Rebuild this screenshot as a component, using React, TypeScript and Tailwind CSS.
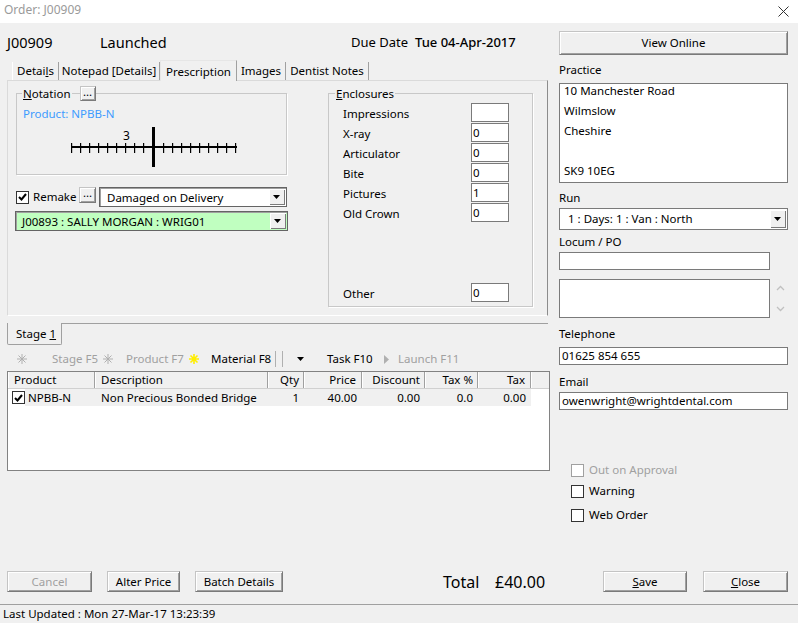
import React from "react";

function Btn({ children, className = "", disabled = false }: { children: React.ReactNode; className?: string; disabled?: boolean }) {
  return (
    <div
      className={`flex items-center justify-center bg-[#f0f0f0] border border-[#c4c4c4] border-r-[#7a7a7a] border-b-[#7a7a7a] shadow-[inset_1px_1px_0_#ffffff,inset_-1px_-1px_0_#a0a0a0] ${
        disabled ? "text-[#a0a0a0]" : "text-black"
      } ${className}`}
    >
      {children}
    </div>
  );
}

function DropBtn() {
  return (
    <div className="w-[16px] h-full shrink-0 flex items-center justify-center bg-[#f0f0f0] shadow-[inset_1px_1px_0_#ffffff,inset_-1px_-1px_0_#7a7a7a]">
      <svg width="8" height="4" viewBox="0 0 8 4">
        <path d="M0 0h7L3.5 4z" fill="#000" />
      </svg>
    </div>
  );
}

function Check({ checked = false, disabled = false }: { checked?: boolean; disabled?: boolean }) {
  return (
    <div
      className={`w-[13px] h-[13px] shrink-0 bg-white border-[1.5px] flex items-center justify-center ${
        disabled ? "border-[#a0a0a0]" : "border-[#333333]"
      }`}
    >
      {checked && (
        <svg width="9" height="8" viewBox="0 0 9 8">
          <path d="M1 4l2.5 2.5L8 1" stroke="#000" strokeWidth="2" fill="none" />
        </svg>
      )}
    </div>
  );
}

function Ast({ color, w = 1 }: { color: string; w?: number }) {
  return (
    <svg width="10" height="10" viewBox="0 0 10 10" className="shrink-0">
      <g stroke={color} strokeWidth={w}>
        <path d="M5 0v10M0 5h10M1.5 1.5l7 7M8.5 1.5l-7 7" />
      </g>
    </svg>
  );
}

function Field({ value, className = "" }: { value?: string; className?: string }) {
  return (
    <div className={`bg-white border border-[#7a7a7a] flex items-center pl-[1px] ${className}`}>
      {value}
    </div>
  );
}

function GroupLegend({ children }: { children: React.ReactNode }) {
  return <span className="bg-[#f0f0f0] px-[1px] leading-[15px]">{children}</span>;
}

const encl = [
  ["Impressions", ""],
  ["X-ray", "0"],
  ["Articulator", "0"],
  ["Bite", "0"],
  ["Pictures", "1"],
  ["Old Crown", "0"],
];

export default function App() {
  return (
    <div className="w-[798px] h-[623px] bg-[#f0f0f0] flex flex-col overflow-hidden text-black font-['Noto_Sans',sans-serif] text-[11.5px]">
      {/* title bar */}
      <div className="h-[23px] shrink-0 bg-white flex items-start pt-[2px] pl-[4px] pr-[9px]">
        <span className="text-[#9a9a9a] text-[12px] leading-[16px]">Order: J00909</span>
        <svg width="11" height="11" viewBox="0 0 11 11" className="ml-auto mt-[4px]">
          <path d="M0.5 0.5l10 10M10.5 0.5l-10 10" stroke="#333" strokeWidth="1" />
        </svg>
      </div>

      <div className="flex h-[548px] shrink-0 pl-[7px]">
        {/* left column */}
        <div className="w-[543px] flex flex-col pt-[8px]">
          <div className="h-[23px] flex items-center">
            <span className="w-[93px] text-[14.5px]">J00909</span>
            <span className="w-[251px] text-[14.5px]">Launched</span>
            <span className="w-[64px] text-[13px]">Due Date</span>
            <span className="text-[13px] font-medium">Tue 04-Apr-2017</span>
          </div>

          {/* tabs */}
          <div className="mt-[6px] h-[20px] flex items-end pl-[5px] relative z-10">
            <div className="w-[47px] h-[18px] flex items-center justify-center border-l border-white border-r border-r-[#a0a0a0]">
              Detai<u>l</u>s
            </div>
            <div className="w-[101px] h-[18px] flex items-center justify-center border-r border-[#a0a0a0]">
              Notepad [Details]
            </div>
            <div className="w-[77px] h-[21px] -mb-px flex items-start pt-[2px] justify-center bg-[#f0f0f0] border-t border-l border-[#e6e6e6] border-r border-r-[#a0a0a0]">
              Prescription
            </div>
            <div className="w-[49px] h-[18px] flex items-center justify-center border-r border-[#a0a0a0]">
              Images
            </div>
            <div className="w-[83px] h-[18px] flex items-center justify-center border-r border-[#a0a0a0]">
              Dentist Notes
            </div>
          </div>

          {/* panel */}
          <div className="h-[236px] w-[541px] border border-[#dadada] border-r-[#8c8c8c] border-b-white flex pl-[7px] pt-[12px]">
            <div className="w-[273px] flex flex-col">
              <div className="ml-[1px] w-[271px] h-[82px] relative border border-[#c8c8c8] shadow-[1px_1px_0_#ffffff]">
                <div className="absolute -top-[8px] left-[5px] h-[15px] flex items-center">
                  <GroupLegend>
                    <u>N</u>otation
                  </GroupLegend>
                  <Btn className="ml-[8px] w-[16px] h-[15px] leading-none pb-[4px]">...</Btn>
                </div>
                <div className="pt-[12px] pl-[6px] leading-[16px] text-[#3d9bff]">Product: NPBB-N</div>
                <div className="relative mt-[3px] ml-[43px] w-[190px] h-[44px]">
                  <svg width="190" height="44" viewBox="0 0 190 44">
                    <rect x="11" y="21" width="166" height="2" fill="#000" />
                    {[11, 20, 29, 38, 47, 56, 65, 74, 83, 103, 112, 121, 130, 139, 148, 157, 166, 175].map((x) => (
                      <rect key={x} x={x} y="18" width="1.2" height="10" fill="#000" />
                    ))}
                    <rect x="92" y="2" width="3" height="40" fill="#000" />
                  </svg>
                  <span className="absolute left-[63px] top-[3px] leading-[16px] text-[12px]">3</span>
                </div>
              </div>

              <div className="mt-[12px] h-[20px] flex items-center">
                <div className="w-[64px] flex items-center pl-[1px]">
                  <Check checked />
                  <span className="ml-[4px]">Remake</span>
                </div>
                <Btn className="self-start w-[17px] h-[16px] leading-none pb-[4px]">...</Btn>
                <div className="ml-[3px] w-[188px] h-[20px] bg-white border border-[#646464] shadow-[inset_1px_1px_0_#a0a0a0] flex p-[1px]">
                  <span className="flex-1 pl-[6px] leading-[17px]">Damaged on Delivery</span>
                  <DropBtn />
                </div>
              </div>
              <div className="mt-[4px] h-[20px] w-[273px] bg-[#c0ffc0] border border-[#646464] shadow-[inset_1px_1px_0_#a0a0a0] flex p-[1px]">
                <span className="flex-1 pl-[5px] leading-[17px]">J00893 : SALLY MORGAN : WRIG01</span>
                <DropBtn />
              </div>
            </div>

            <div className="ml-[40px] w-[205px] h-[214px] relative border border-[#c8c8c8] shadow-[1px_1px_0_#ffffff] flex flex-col gap-[1px] pt-[9px] pl-[14px] pb-[4px]">
              <div className="absolute -top-[8px] left-[6px] h-[15px] flex items-center">
                <GroupLegend>
                  <u>E</u>nclosures
                </GroupLegend>
              </div>
              {encl.map(([label, val]) => (
                <div key={label} className="h-[19px] flex items-center">
                  <span className="w-[128px] pt-[3px]">{label}</span>
                  <Field value={val} className="w-[38px] h-[19px]" />
                </div>
              ))}
              <div className="mt-auto h-[19px] flex items-center">
                <span className="w-[128px] pt-[3px]">Other</span>
                <Field value="0" className="w-[38px] h-[19px]" />
              </div>
            </div>
          </div>

          {/* stage tab */}
          <div className="mt-[7px] h-[22px] flex">
            <div className="w-[55px] h-[22px] border-l border-r border-b border-[#a0a0a0] rounded-b-[2px] flex items-center pl-[8px]">
              Stage <u className="ml-[3px]">1</u>
            </div>
            <div className="flex-1 mr-[2px] border-t border-[#a0a0a0]" />
          </div>

          {/* toolbar */}
          <div className="mt-[4px] h-[20px] flex items-center text-[#a0a0a0]">
            <span className="w-[10px] shrink-0" />
            <Ast color="#b0b0b0" />
            <span className="w-[25px] shrink-0" />
            <span className="w-[51px] shrink-0">Stage F5</span>
            <Ast color="#b0b0b0" />
            <span className="w-[13px] shrink-0" />
            <span className="w-[63px] shrink-0">Product F7</span>
            <Ast color="#ffee00" w={1.6} />
            <span className="w-[12px] shrink-0" />
            <span className="w-[64px] shrink-0 text-black">Material F8</span>
            <span className="w-px h-[16px] bg-[#b0b0b0] shrink-0" />
            <span className="w-[6px] shrink-0" />
            <span className="w-px h-[16px] bg-[#b0b0b0] shrink-0" />
            <span className="w-[14px] shrink-0" />
            <svg width="8" height="4" viewBox="0 0 8 4" className="shrink-0">
              <path d="M0 0h7L3.5 4z" fill="#000" />
            </svg>
            <span className="w-[22px] shrink-0" />
            <span className="w-[57px] shrink-0 text-black">Task F10</span>
            <svg width="6" height="9" viewBox="0 0 6 9" className="shrink-0">
              <path d="M0 0l5 4.5L0 9z" fill="#b0b0b0" />
            </svg>
            <span className="w-[8px] shrink-0" />
            <span>Launch F11</span>
          </div>

          {/* grid */}
          <div className="mt-[2px] h-[100px] w-[543px] border border-[#828282] bg-white flex flex-col">
            <div className="h-[17px] flex bg-[#f0f0f0] border-b border-[#d0d0d0]">
              {[
                ["Product", "w-[87px] pl-[6px]"],
                ["Description", "w-[173px] pl-[6px]"],
                ["Qty", "w-[36px] justify-end pr-[4px]"],
                ["Price", "w-[58px] justify-end pr-[5px]"],
                ["Discount", "w-[63px] justify-end pr-[4px]"],
                ["Tax %", "w-[53px] justify-end pr-[4px]"],
                ["Tax", "w-[53px] justify-end pr-[5px]"],
              ].map(([t, c]) => (
                <div key={t} className={`${c} h-full flex items-center border-r border-[#a0a0a0] shadow-[inset_1px_0_0_#ffffff]`}>
                  {t}
                </div>
              ))}
              <div className="flex-1 shadow-[inset_1px_0_0_#ffffff]" />
            </div>
            <div className="h-[17px] flex">
              <div className="w-[17px] flex items-center pl-[4px]">
                <Check checked />
              </div>
              <div className="w-[506px] flex bg-[#f0f0f0] items-center">
                <span className="w-[70px] pl-[3px]">NPBB-N</span>
                <span className="w-[173px] pl-[6px]">Non Precious Bonded Bridge</span>
                <span className="w-[36px] text-right pr-[5px]">1</span>
                <span className="w-[58px] text-right pr-[5px]">40.00</span>
                <span className="w-[63px] text-right pr-[5px]">0.00</span>
                <span className="w-[53px] text-right pr-[5px]">0.0</span>
                <span className="w-[53px] text-right pr-[5px]">0.00</span>
              </div>
            </div>
          </div>
        </div>

        {/* right column */}
        <div className="ml-[9px] w-[229px] flex flex-col pt-[8px]">
          <Btn className="h-[24px]">View Online</Btn>
          <div className="mt-[7px] h-[16px] leading-[16px]">Practice</div>
          <div className="mt-[5px] h-[100px] bg-white border border-[#7a7a7a] pl-[4px]">
            {["10 Manchester Road", "Wilmslow", "Cheshire", "", "SK9 10EG"].map((l, i) => (
              <div key={i} className="h-[20px] leading-[14px]">
                {l}
              </div>
            ))}
          </div>
          <div className="mt-[7px] h-[16px] leading-[16px]">Run</div>
          <div className="mt-[2px] h-[22px] bg-white border border-[#7a7a7a] flex p-[1px]">
            <span className="flex-1 pl-[7px] leading-[18px]">1 : Days: 1 : Van : North</span>
            <DropBtn />
          </div>
          <div className="mt-[4px] h-[16px] leading-[16px]">Locum / PO</div>
          <Field className="mt-[2px] w-[211px] h-[18px]" />
          <div className="mt-[9px] flex">
            <Field className="w-[211px] h-[39px]" />
            <div className="ml-[6px] flex flex-col justify-between py-[6px]">
              <svg width="9" height="6" viewBox="0 0 9 6">
                <path d="M1 5l3.5-3.5L8 5" stroke="#c0c0c0" strokeWidth="1.3" fill="none" />
              </svg>
              <svg width="9" height="6" viewBox="0 0 9 6">
                <path d="M1 1l3.5 3.5L8 1" stroke="#c0c0c0" strokeWidth="1.3" fill="none" />
              </svg>
            </div>
          </div>
          <div className="mt-[8px] h-[16px] leading-[16px]">Telephone</div>
          <Field value="01625 854 655" className="mt-[5px] h-[18px] pl-[2px]" />
          <div className="mt-[9px] h-[16px] leading-[16px]">Email</div>
          <Field value="owenwright@wrightdental.com" className="mt-[2px] h-[18px] pl-[2px]" />

          <div className="mt-[52px] h-[16px] flex items-center pl-[12px]">
            <Check disabled />
            <span className="ml-[5px] text-[#a0a0a0]">Out on Approval</span>
          </div>
          <div className="mt-[5px] h-[16px] flex items-center pl-[12px]">
            <Check />
            <span className="ml-[5px]">Warning</span>
          </div>
          <div className="mt-[8px] h-[16px] flex items-center pl-[12px]">
            <Check />
            <span className="ml-[5px]">Web Order</span>
          </div>
        </div>
      </div>

      {/* bottom buttons */}
      <div className="h-[21px] shrink-0 flex items-center pl-[7px]">
        <Btn disabled className="w-[85px] h-full">
          Cancel
        </Btn>
        <Btn className="ml-[15px] w-[73px] h-full">Alter Price</Btn>
        <Btn className="ml-[15px] w-[88px] h-full">Batch Details</Btn>
        <span className="ml-[160px] w-[52px] text-[16px]">Total</span>
        <span className="w-[108px] text-[16px]">£40.00</span>
        <Btn className="w-[84px] h-full">
          <u>S</u>ave
        </Btn>
        <Btn className="ml-[16px] w-[85px] h-full">
          <u>C</u>lose
        </Btn>
      </div>

      <div className="mt-[12px] border-t border-[#a0a0a0]" />
      <div className="h-[18px] shrink-0 flex items-center pl-[3px]">Last Updated : Mon 27-Mar-17 13:23:39</div>
    </div>
  );
}
